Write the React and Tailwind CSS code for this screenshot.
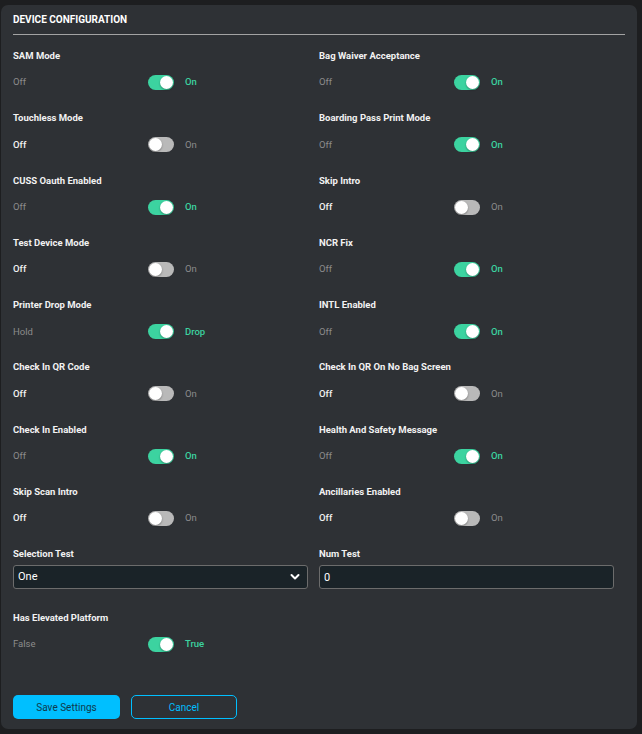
import React, { useState } from 'react';

const font = { fontFamily: 'Roboto, "Liberation Sans", sans-serif' };

const initialToggles = [
  { name: 'SAM Mode', off: 'Off', on: 'On', value: true },
  { name: 'Bag Waiver Acceptance', off: 'Off', on: 'On', value: true },
  { name: 'Touchless Mode', off: 'Off', on: 'On', value: false },
  { name: 'Boarding Pass Print Mode', off: 'Off', on: 'On', value: true },
  { name: 'CUSS Oauth Enabled', off: 'Off', on: 'On', value: true },
  { name: 'Skip Intro', off: 'Off', on: 'On', value: false },
  { name: 'Test Device Mode', off: 'Off', on: 'On', value: false },
  { name: 'NCR Fix', off: 'Off', on: 'On', value: true },
  { name: 'Printer Drop Mode', off: 'Hold', on: 'Drop', value: true },
  { name: 'INTL Enabled', off: 'Off', on: 'On', value: true },
  { name: 'Check In QR Code', off: 'Off', on: 'On', value: false },
  { name: 'Check In QR On No Bag Screen', off: 'Off', on: 'On', value: false },
  { name: 'Check In Enabled', off: 'Off', on: 'On', value: true },
  { name: 'Health And Safety Message', off: 'Off', on: 'On', value: true },
  { name: 'Skip Scan Intro', off: 'Off', on: 'On', value: false },
  { name: 'Ancillaries Enabled', off: 'Off', on: 'On', value: false },
];

const Switch = ({ checked, onChange }) => (
  <button
    onClick={onChange}
    className={`relative w-[26px] h-[15px] rounded-full shrink-0 transition-colors ${
      checked ? 'bg-[#3cd3a0]' : 'bg-[#b9b9b9]'
    }`}
  >
    <span
      className={`absolute top-[1px] w-[13px] h-[13px] rounded-full bg-white shadow-[0_1px_2px_rgba(0,0,0,0.35)] ${
        checked ? 'left-[12px]' : 'left-[1px]'
      }`}
    />
  </button>
);

const ToggleField = ({ item, onToggle }) => (
  <div className="pr-[11px]">
    <div className="text-[9.5px] leading-[14px] font-bold text-[#f2f2f2]">{item.name}</div>
    <div className="mt-[12px] flex items-center h-[15px] text-[9.5px]">
      <span className={`w-[135px] ${item.value ? 'text-[#8c8c8c]' : 'text-[#f2f2f2] font-medium'}`}>
        {item.off}
      </span>
      <Switch checked={item.value} onChange={onToggle} />
      <span className={`ml-[11px] ${item.value ? 'text-[#3cd3a0] font-medium' : 'text-[#8c8c8c]'}`}>
        {item.on}
      </span>
    </div>
  </div>
);

const App = () => {
  const [toggles, setToggles] = useState(initialToggles);
  const [elevated, setElevated] = useState(true);

  const flip = (i) =>
    setToggles((prev) => prev.map((t, idx) => (idx === i ? { ...t, value: !t.value } : t)));

  return (
    <div className="min-h-screen bg-[#1d1e20] pt-[5px] pb-[5px] pl-px pr-[5px]" style={font}>
      <div className="h-[724px] bg-[#2e3135] rounded-[7px] px-[12px] flex flex-col">
        {/* Header */}
        <div className="pt-[9px] pb-[8px] border-b border-[#a3a3a3]">
          <h2 className="text-[10px] leading-[12px] font-bold uppercase text-white">Device Configuration</h2>
        </div>

        {/* Toggles */}
        <div className="mt-[14px] grid grid-cols-2 gap-y-[21.3px]">
          {toggles.map((t, i) => (
            <ToggleField key={t.name} item={t} onToggle={() => flip(i)} />
          ))}

          {/* Selection + Number */}
          <div className="pr-[11px]">
            <div className="text-[9.5px] leading-[14px] font-bold text-[#f2f2f2]">Selection Test</div>
            <div className="mt-[4px] relative">
              <select className="appearance-none block w-full h-[24px] bg-[#1a2328] border border-[#6c6c6c] rounded-[3px] pl-[4px] text-[11px] text-white outline-none">
                <option>One</option>
                <option>Two</option>
                <option>Three</option>
              </select>
              <svg
                className="absolute right-[8px] top-[8px] w-[10px] h-[8px] pointer-events-none"
                viewBox="0 0 10 8"
                fill="none"
                stroke="white"
                strokeWidth="2"
                strokeLinecap="round"
                strokeLinejoin="round"
              >
                <path d="M1.5 2l3.5 3.5L8.5 2" />
              </svg>
            </div>
          </div>
          <div className="pr-[11px]">
            <div className="text-[9.5px] leading-[14px] font-bold text-[#f2f2f2]">Num Test</div>
            <input
              type="number"
              defaultValue={0}
              className="mt-[4px] block w-full h-[24px] bg-[#1a2328] border border-[#6c6c6c] rounded-[3px] pl-[4px] text-[11px] text-white outline-none"
            />
          </div>

          <ToggleField
            item={{ name: 'Has Elevated Platform', off: 'False', on: 'True', value: elevated }}
            onToggle={() => setElevated(!elevated)}
          />
        </div>

        {/* Actions */}
        <div className="mt-auto mb-[10px] flex gap-[11px]">
          <button className="w-[107px] h-[24px] rounded-[5px] bg-[#00bfff] text-[10px] text-[#0f3a4d]">
            Save Settings
          </button>
          <button className="w-[106px] h-[24px] rounded-[5px] border border-[#00bfff] text-[10px] text-[#00bfff]">
            Cancel
          </button>
        </div>
      </div>
    </div>
  );
};

export default App;
